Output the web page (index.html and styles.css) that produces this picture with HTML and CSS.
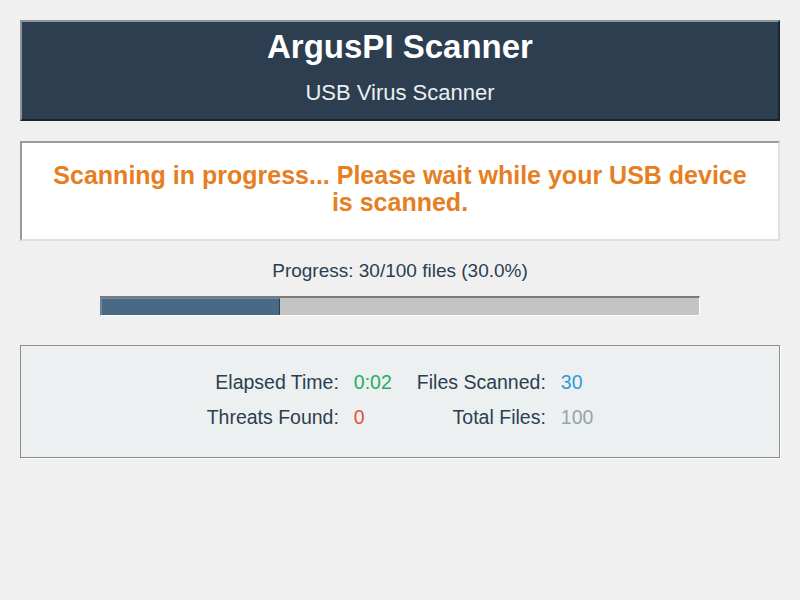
FILE: index.html
```html
<!DOCTYPE html>
<html>
<head>
<meta charset="utf-8">
<link rel="stylesheet" href="styles.css">
</head>
<body>
<div class="app">
  <header class="header">
    <h1 class="title">ArgusPI Scanner</h1>
    <p class="subtitle">USB Virus Scanner</p>
  </header>
  <section class="status">
    <p class="status-text">Scanning in progress... Please wait while your USB device<br>is scanned.</p>
  </section>
  <section class="progress">
    <p class="progress-text">Progress: 30/100 files (30.0%)</p>
    <div class="bar"><div class="bar-fill" style="width:30%"></div></div>
  </section>
  <section class="stats">
    <div class="grid">
      <span class="label">Elapsed Time:</span><span class="val green">0:02</span>
      <span class="label">Files Scanned:</span><span class="val blue">30</span>
      <span class="label">Threats Found:</span><span class="val red">0</span>
      <span class="label">Total Files:</span><span class="val gray">100</span>
    </div>
  </section>
</div>
</body>
</html>
```
FILE: styles.css
```css
* { box-sizing: border-box; }
html, body { margin: 0; padding: 0; }
body {
  background: #f0f0f0;
  font-family: "Liberation Sans", Arial, sans-serif;
  width: 800px;
  height: 600px;
}
.app {
  padding: 20px;
  display: flex;
  flex-direction: column;
}
.header {
  height: 101px;
  background: #2c3e50;
  border-style: solid;
  border-width: 2px 2px 2px 2px;
  border-color: #8c939b #1a2530 #1a2530 #8c939b;
  text-align: center;
  color: #fff;
  padding-top: 6px;
}
.title {
  margin: 0;
  font-size: 33px;
  line-height: 38px;
  font-weight: bold;
}
.subtitle {
  margin: 14px 0 0;
  font-size: 22px;
  line-height: 26px;
  color: #ecf0f1;
}
.status {
  margin-top: 20px;
  height: 100px;
  background: #fff;
  border-style: solid;
  border-width: 2px;
  border-color: #9a9a9a #e0e0e0 #e0e0e0 #9a9a9a;
  display: flex;
  align-items: center;
  justify-content: center;
  padding-bottom: 4px;
}
.status-text {
  margin: 0;
  text-align: center;
  color: #e67e22;
  font-weight: bold;
  font-size: 25px;
  line-height: 27px;
}
.progress {
  display: flex;
  flex-direction: column;
  align-items: center;
  padding-top: 19px;
}
.progress-text {
  margin: 0;
  font-size: 19px;
  line-height: 22px;
  color: #2c3e50;
}
.bar {
  margin-top: 14px;
  width: 600px;
  height: 20px;
  background: #c4c4c4;
  border-style: solid;
  border-width: 2px 1px 1px 1px;
  border-color: #7a7a7a #fff #fff #7a7a7a;
}
.bar-fill {
  height: 100%;
  background: #4a6984;
  border-right: 1px solid #2c3e50;
  border-top: 1px solid #6d8aa3;
  border-left: 1px solid #6d8aa3;
}
.stats {
  margin-top: 29px;
  height: 113px;
  background: #ecf0f1;
  border: 1px solid #8c8c8c;
  box-shadow: 1px 1px 0 #fff;
  display: flex;
  justify-content: center;
  padding-top: 25px;
}
.grid {
  display: grid;
  grid-template-columns: auto auto auto auto;
  row-gap: 13px;
  align-content: start;
  font-size: 19.5px;
  line-height: 22px;
}
.label {
  color: #2c3e50;
  text-align: right;
  padding-right: 15px;
}
.val { text-align: left; padding-right: 25px; }
.gray { padding-right: 0; }
.blue { padding-right: 0; }
.green { color: #27ae60; }
.blue { color: #3498db; }
.red { color: #e74c3c; }
.gray { color: #95a5a6; }
```
